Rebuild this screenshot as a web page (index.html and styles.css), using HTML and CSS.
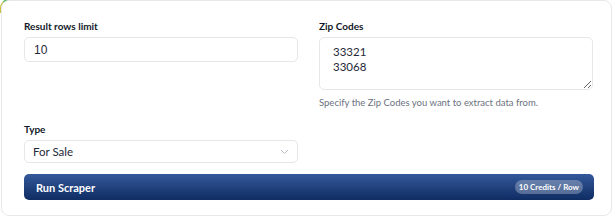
FILE: index.html
```html
<!DOCTYPE html>
<html lang="en">
<head>
  <meta charset="UTF-8">
  <meta name="viewport" content="width=device-width, initial-scale=1.0">
  <title>Scraper</title>
  <link rel="stylesheet" href="styles.css">
</head>
<body>

  <div class="card">
    <div class="form-grid">
      <!-- Rows limit -->
      <div class="field">
        <label class="field-label" for="rowsLimit">Result rows limit</label>
        <input type="number" id="rowsLimit" class="text-input" value="10">
      </div>

      <!-- Zip codes -->
      <div class="field">
        <label class="field-label" for="zipCodes">Zip Codes</label>
        <textarea id="zipCodes" class="text-area">33321
33068</textarea>
        <p class="help-text">Specify the Zip Codes you want to extract data from.</p>
      </div>

      <!-- Type -->
      <div class="field">
        <label class="field-label" for="listingType">Type</label>
        <div class="select-wrap">
          <select id="listingType" class="select-input">
            <option>For Sale</option>
            <option>For Rent</option>
            <option>Sold</option>
          </select>
          <svg class="chevron" width="9" height="6" viewBox="0 0 9 6"><path d="M1 1l3.5 3.5L8 1" fill="none" stroke="#b8bcc4" stroke-width="1"/></svg>
        </div>
      </div>
    </div>

    <button class="run-btn">
      <span>Run Scraper</span>
      <span class="credits">10 Credits / Row</span>
    </button>
  </div>

</body>
</html>
```

FILE: styles.css
```css
body {
  margin: 0;
  font-family: Lato, "Noto Sans", sans-serif;
  background-color: #ffffff;
  color: #1f2937;
  width: 616px;
  height: 218px;
  overflow: hidden;
}
.card {
  position: relative;
  box-sizing: border-box;
  width: 611px;
  height: 216px;
  margin-left: 1px;
  padding: 18px 19px 0 22px;
  background-color: white;
  border: 1px solid #e6e8ec;
  border-radius: 8px;
}
.card::before {
  content: "";
  position: absolute;
  top: -2px;
  left: -2px;
  width: 12px;
  height: 12px;
  border-top: 2px solid #4caf50;
  border-left: 2px solid #c8c23a;
  border-top-left-radius: 9px;
  z-index: -1;
}
.form-grid {
  display: grid;
  grid-template-columns: 274px 274px;
  column-gap: 21px;
  row-gap: 13px;
}
.field {
  display: flex;
  flex-direction: column;
}
.field-label {
  font-size: 10px;
  font-weight: 700;
  line-height: 14px;
  margin-bottom: 4px;
  color: #111827;
}
.text-input, .text-area, .select-input {
  box-sizing: border-box;
  width: 100%;
  border: 1px solid #e5e7eb;
  border-radius: 5px;
  background-color: white;
  color: #1f2937;
  outline: none;
}
.text-input {
  height: 25px;
  padding: 0 9px;
  font-family: "Liberation Sans", Arial, sans-serif;
  font-size: 12px;
  -moz-appearance: textfield;
}
.text-input::-webkit-inner-spin-button {
  -webkit-appearance: none;
}
.text-area {
  height: 53px;
  padding: 6px 13px;
  font-family: Lato, sans-serif;
  font-size: 11.5px;
  line-height: 15px;
  resize: vertical;
}
.help-text {
  margin: 6px 0 0;
  font-size: 9.5px;
  line-height: 13px;
  color: #6b7280;
}
.select-wrap {
  position: relative;
}
.select-input {
  height: 23px;
  padding: 0 8px;
  font-family: Lato, sans-serif;
  font-size: 11.5px;
  appearance: none;
  -webkit-appearance: none;
}
.chevron {
  position: absolute;
  right: 9px;
  top: 9px;
}
.run-btn {
  display: flex;
  justify-content: space-between;
  align-items: center;
  box-sizing: border-box;
  width: 570px;
  height: 26px;
  margin-top: 11px;
  padding: 0 11px 0 12px;
  border: none;
  border-radius: 5px;
  background: linear-gradient(to bottom, #34599a, #0f2c63);
  color: white;
  font-family: Lato, sans-serif;
  font-size: 11px;
  font-weight: 700;
  cursor: pointer;
}
.credits {
  padding: 0 4px;
  height: 14px;
  line-height: 14px;
  border-radius: 7px;
  background-color: rgba(255, 255, 255, 0.28);
  font-size: 8px;
  font-weight: 700;
}
```
